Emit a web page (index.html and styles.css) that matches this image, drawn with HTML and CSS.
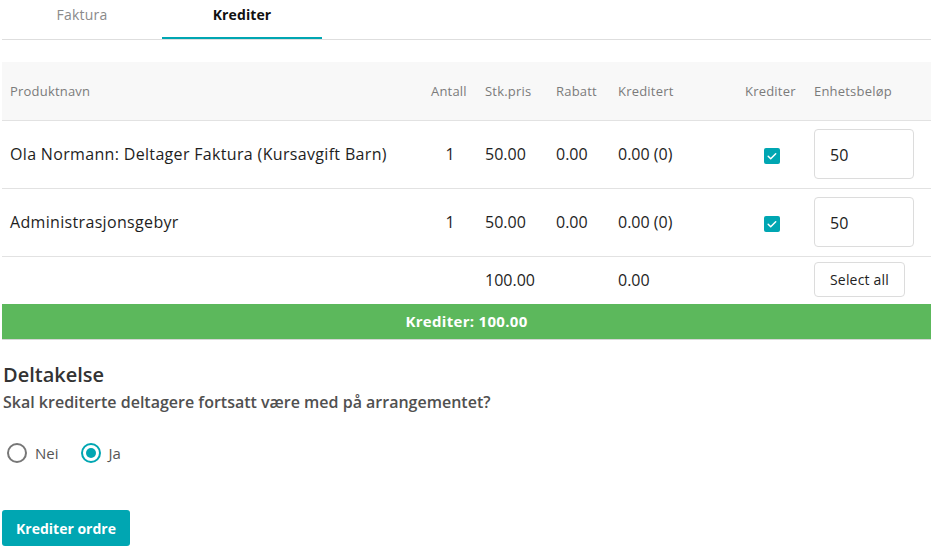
FILE: index.html
```html
<!DOCTYPE html>
<html lang="no">
<head>
<meta charset="utf-8">
<link rel="stylesheet" href="styles.css">
</head>
<body>
<div class="page">
  <div class="tabs">
    <div class="tab">Faktura</div>
    <div class="tab active">Krediter</div>
  </div>

  <table class="items">
    <colgroup>
      <col class="c-name"><col class="c-qty"><col class="c-price"><col class="c-disc"><col class="c-cred"><col class="c-chk"><col class="c-amt">
    </colgroup>
    <thead>
      <tr>
        <th>Produktnavn</th>
        <th>Antall</th>
        <th>Stk.pris</th>
        <th>Rabatt</th>
        <th>Kreditert</th>
        <th>Krediter</th>
        <th>Enhetsbeløp</th>
      </tr>
    </thead>
    <tbody>
      <tr class="row">
        <td class="name">Ola Normann: Deltager Faktura (Kursavgift Barn)</td>
        <td class="center">1</td>
        <td>50.00</td>
        <td>0.00</td>
        <td>0.00 (0)</td>
        <td class="center"><span class="check"><svg viewBox="0 0 16 16" width="16" height="16"><path d="M4.2 8.3l2.5 2.4 5-5" fill="none" stroke="#fff" stroke-width="1.5" stroke-linecap="round" stroke-linejoin="round"/></svg></span></td>
        <td><div class="amount">50</div></td>
      </tr>
      <tr class="row">
        <td class="name">Administrasjonsgebyr</td>
        <td class="center">1</td>
        <td>50.00</td>
        <td>0.00</td>
        <td>0.00 (0)</td>
        <td class="center"><span class="check"><svg viewBox="0 0 16 16" width="16" height="16"><path d="M4.2 8.3l2.5 2.4 5-5" fill="none" stroke="#fff" stroke-width="1.5" stroke-linecap="round" stroke-linejoin="round"/></svg></span></td>
        <td><div class="amount">50</div></td>
      </tr>
      <tr class="total">
        <td></td>
        <td></td>
        <td>100.00</td>
        <td></td>
        <td>0.00</td>
        <td></td>
        <td><button class="select-all">Select all</button></td>
      </tr>
    </tbody>
  </table>
  <div class="summary">Krediter: 100.00</div>

  <h2 class="title">Deltakelse</h2>
  <p class="question">Skal krediterte deltagere fortsatt være med på arrangementet?</p>

  <div class="radios">
    <label class="radio"><span class="dot"></span>Nei</label>
    <label class="radio"><span class="dot on"></span>Ja</label>
  </div>

  <button class="submit">Krediter ordre</button>
</div>
</body>
</html>
```

FILE: styles.css
```css
* { box-sizing: border-box; }
html, body { margin: 0; padding: 0; background: #fff; }
body { font-family: "Open Sans", "Liberation Sans", sans-serif; color: #222; }
.page { padding: 0 4px 0 2px; width: 935px; }

.tabs { display: flex; border-bottom: 1px solid #dedede; }
.tab {
  width: 160px; text-align: center; font-size: 14px; color: #8a8a8a; letter-spacing: 0.25px;
  line-height: 20px; padding: 5px 0 12px; border-bottom: 2px solid transparent;
}
.tab.active { color: #111; font-weight: 700; border-bottom-color: #00a6b2; letter-spacing: 0.1px; }

.items { width: 929px; border-collapse: collapse; table-layout: fixed; margin-top: 22px; }
.c-name { width: 421px; }
.c-qty { width: 54px; }
.c-price { width: 71px; }
.c-disc { width: 62px; }
.c-cred { width: 127px; }
.c-chk { width: 69px; }
.c-amt { width: 125px; }

.items th {
  background: #f8f8f8; height: 58px; padding: 1px 8px 0; text-align: left; letter-spacing: 0.2px;
  font-weight: 400; font-size: 13px; color: #7b7b7b; border-bottom: 1px solid #e2e2e2;
  white-space: nowrap;
}
.items td { padding: 0 8px; font-size: 16px; color: #1e1e1e; white-space: nowrap; }
.items td.name { letter-spacing: 0.33px; }
.items .row td { height: 68px; border-bottom: 1px solid #e2e2e2; }
.items .total td { height: 48px; }
.items td.center { text-align: center; }

.check {
  display: inline-block; width: 16px; height: 16px; background: #00a6b2;
  border-radius: 2px; vertical-align: middle; margin-top: 1px;
}
.check svg { display: block; }

.amount {
  width: 100px; height: 50px; border: 1px solid #dcdcdc; border-radius: 4px;
  padding: 0 15px; line-height: 50px; font-size: 16px; color: #222; margin-top: 0;
}

.select-all {
  font-family: inherit; font-size: 14px; color: #222; background: #fff; letter-spacing: 0.2px;
  border: 1px solid #dcdcdc; border-radius: 4px; height: 35px; width: 91px; padding: 0;
  margin-top: -1px;
}

.summary {
  background: #5cb85c; color: #fff; font-weight: 700; font-size: 15px; letter-spacing: 0.3px;
  text-align: center; height: 36px; line-height: 35px; width: 929px;
  border-bottom: 1px solid #d6d6d6;
}

.title { margin: 20px 0 0 1px; font-size: 20px; font-weight: 600; color: #333; line-height: 30px; }
.question { margin: 0 0 0 1px; font-size: 16px; font-weight: 600; color: #505050; line-height: 24px; }

.radios { display: flex; gap: 22px; margin: 29px 0 0 5px; }
.radio { display: flex; align-items: center; font-size: 15px; color: #555; gap: 8px; }
.dot {
  width: 20px; height: 20px; border: 2px solid #777; border-radius: 50%;
  display: inline-block; position: relative;
}
.dot.on { border-color: #00a6b2; }
.dot.on::after {
  content: ""; position: absolute; left: 3px; top: 3px; width: 10px; height: 10px;
  border-radius: 50%; background: #00a6b2;
}

.submit {
  display: block; margin-top: 47px; background: #00a6b2; color: #fff; border: 0;
  border-radius: 3px; font-family: inherit; font-weight: 700; font-size: 14px;
  height: 36px; width: 128px; padding: 0;
}
```
